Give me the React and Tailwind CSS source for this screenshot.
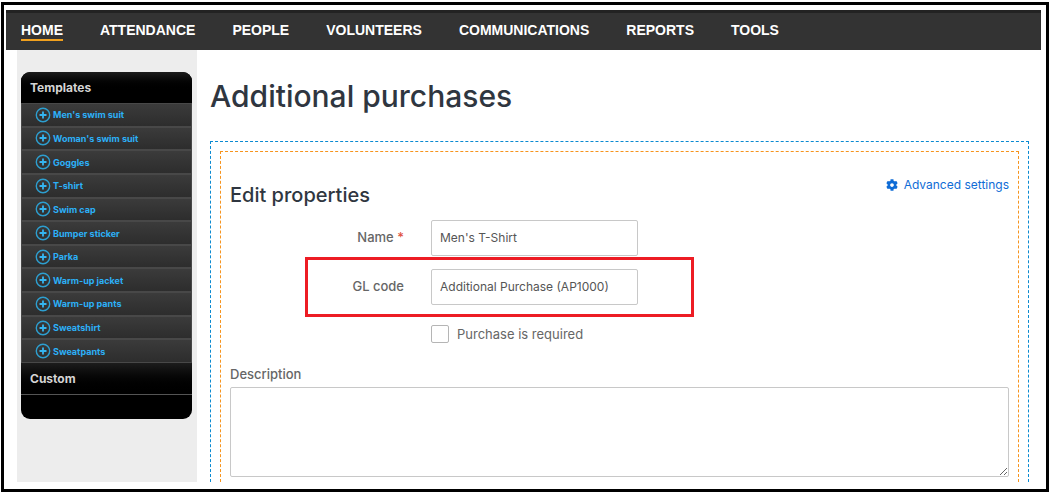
import { FaCog } from "react-icons/fa";

const navLinks = [
  "HOME",
  "ATTENDANCE",
  "PEOPLE",
  "VOLUNTEERS",
  "COMMUNICATIONS",
  "REPORTS",
  "TOOLS",
];

const templates = [
  "Men's swim suit",
  "Woman's swim suit",
  "Goggles",
  "T-shirt",
  "Swim cap",
  "Bumper sticker",
  "Parka",
  "Warm-up jacket",
  "Warm-up pants",
  "Sweatshirt",
  "Sweatpants",
];

function PlusIcon() {
  return (
    <svg className="w-4 h-4 shrink-0" viewBox="0 0 16 16" fill="none">
      <circle cx="8" cy="8" r="6.7" stroke="#2d9fd0" strokeWidth="1.4" />
      <path d="M8 4.5v7M4.5 8h7" stroke="#35b5f0" strokeWidth="1.8" />
    </svg>
  );
}

function Navbar() {
  return (
    <nav className="ml-0.5 mr-[5px] h-10 bg-[#333333] border-t-3 border-[#222222] flex gap-[37px] px-[15px] pt-2 font-['Liberation_Sans',sans-serif] font-bold text-sm text-white">
      {navLinks.map((link, i) => (
        <a
          key={link}
          href="#"
          className={
            i === 0
              ? "h-5 leading-[18px] border-b-2 border-[#f0a01e]"
              : "h-5 leading-[18px]"
          }
        >
          {link}
        </a>
      ))}
    </nav>
  );
}

function Sidebar() {
  return (
    <aside className="w-[180px] shrink-0 bg-[#ededed] pt-[22px] pl-1 pr-[5px]">
      <div className="rounded-[9px] overflow-hidden bg-black text-[#d4d4d4]">
        <h2 className="h-[31px] leading-[31px] px-[9px] text-xs font-bold bg-linear-to-b from-[#1c1c1c] to-black to-60%">
          Templates
        </h2>
        {/* Liste des modèles */}
        <ul className="h-[260px] flex flex-col border-x border-b border-[#484848]">
          {templates.map((name) => (
            <li
              key={name}
              className="flex-1 border-t-2 first:border-t border-[#484848] bg-linear-to-b from-[#3b3b3b] to-[#2d2d2d]"
            >
              <a
                href="#"
                className="h-full flex items-center gap-0.5 pl-[13px] text-[9px] leading-none font-bold text-[#2cb0f8]"
              >
                <PlusIcon />
                {name}
              </a>
            </li>
          ))}
        </ul>
        <h2 className="h-8 leading-[31px] px-[9px] text-xs font-bold border-b border-[#555555] bg-linear-to-b from-[#1c1c1c] to-black">
          Custom
        </h2>
        <div className="h-6" />
      </div>
    </aside>
  );
}

function EditForm() {
  return (
    <form className="border border-b-0 border-dashed border-[#f7941d] px-[9px] pt-[25px] pb-[5px] text-[#666666]">
      <div className="flex justify-between items-start">
        <h2 className="pt-1 text-xl leading-7 font-medium text-[#2f3640]">
          Edit properties
        </h2>
        <a
          href="#"
          className="flex items-center gap-1.5 text-xs text-[#0f6cd6]"
        >
          <FaCog className="w-3 h-3" />
          Advanced settings
        </a>
      </div>

      <div className="mt-[11px] flex items-center">
        <label
          htmlFor="name"
          className="w-[174px] text-right text-[13px] font-medium"
        >
          Name <span className="text-[#e0523f]">*</span>
        </label>
        <input
          id="name"
          type="text"
          defaultValue="Men's T-Shirt"
          className="ml-[27px] w-[207px] h-9 px-2 pb-0.5 border border-[#c8c8c8] rounded-[2px] text-xs text-[#555555]"
        />
      </div>

      <div className="mt-[13px] flex items-center relative">
        <label
          htmlFor="gl-code"
          className="w-[174px] text-right text-[13px] font-medium"
        >
          GL code
        </label>
        <input
          id="gl-code"
          type="text"
          defaultValue="Additional Purchase (AP1000)"
          className="ml-[27px] w-[207px] h-9 px-2 pb-0.5 border border-[#c8c8c8] rounded-[2px] text-xs text-[#555555]"
        />
        {/* Cadre rouge */}
        <div className="absolute left-[75px] -top-3 w-[389px] h-[60px] border-3 border-[#ed1c24] pointer-events-none" />
      </div>

      <label className="mt-[19px] ml-[201px] flex items-center gap-2 text-[13px] leading-5">
        <input
          type="checkbox"
          className="appearance-none w-[18px] h-[18px] border border-[#b5b5b5] rounded-[2px] bg-white"
        />
        Purchase is required
      </label>

      <label
        htmlFor="description"
        className="mt-5 block text-[13px] leading-5 font-medium"
      >
        Description
      </label>
      <textarea
        id="description"
        className="mt-[3px] block w-full h-[90px] border border-[#c8c8c8] rounded-[2px]"
      />
    </form>
  );
}

function App() {
  return (
    <div className="bg-white pt-0.5 px-px pb-[3px] font-['Inter',sans-serif]">
      <div className="border-3 border-black pt-[5px] pb-[7px]">
        <Navbar />
        <div className="pl-[13px] flex">
          <Sidebar />
          <main className="flex-1 pl-[13px] pr-[17px] pt-[26px]">
            <h1 className="text-3xl leading-10 font-medium text-[#2f3640]">
              Additional purchases
            </h1>
            <div className="mt-[25px] border border-b-0 border-dashed border-[#0a8ad2] px-[9px] pt-[9px]">
              <EditForm />
            </div>
          </main>
        </div>
      </div>
    </div>
  );
}

export default App;
